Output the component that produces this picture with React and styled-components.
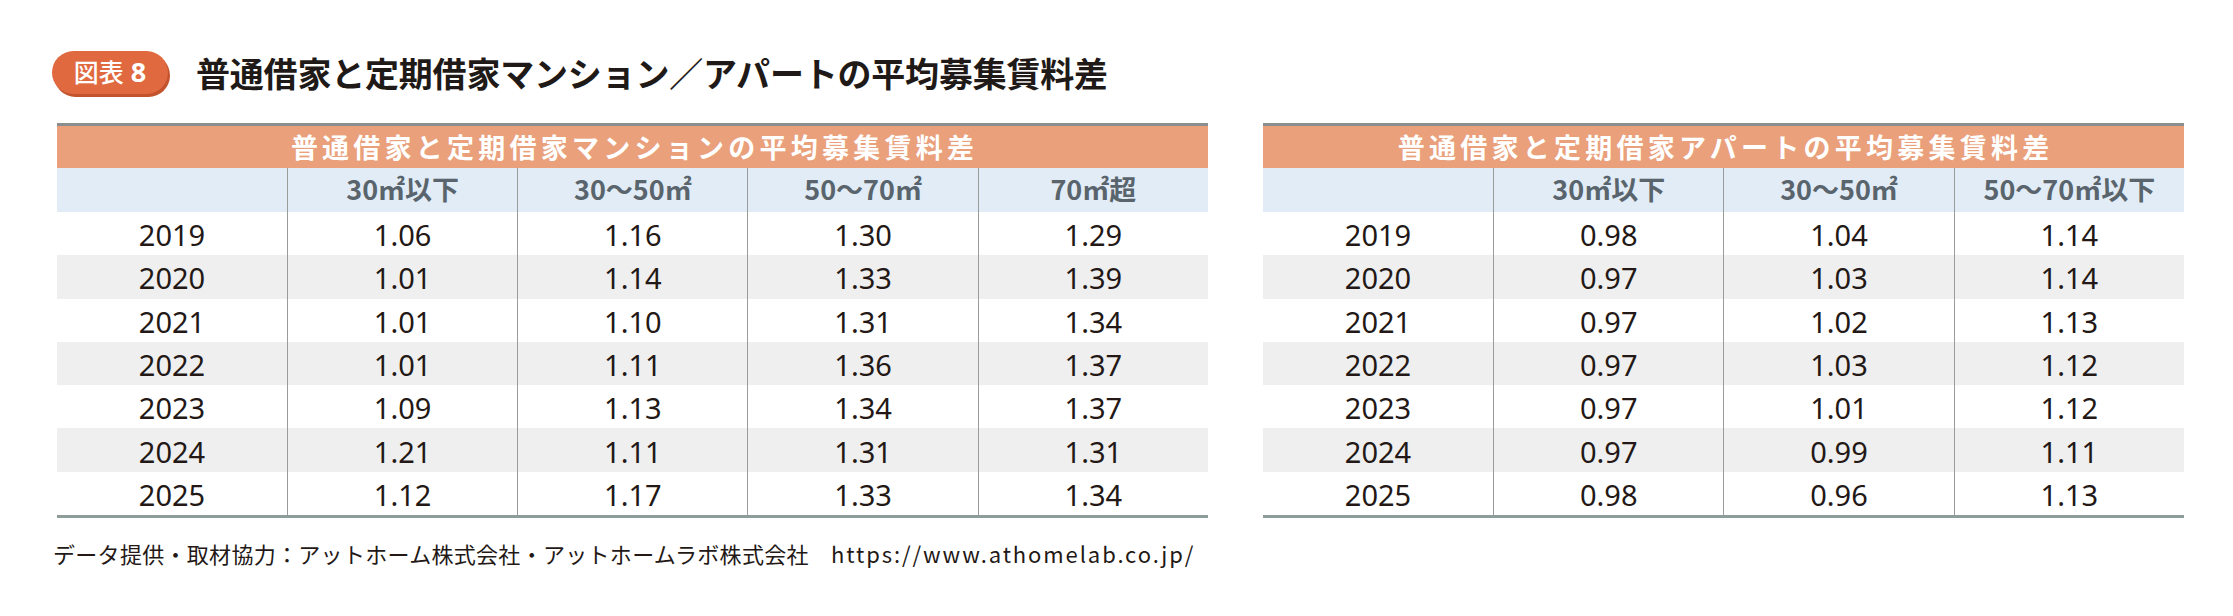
import React from "react";
import styled, { createGlobalStyle } from "styled-components";

const GlobalStyle = createGlobalStyle`
  html, body { margin: 0; padding: 0; background: #ffffff; }
  body { font-family: "Noto Sans CJK JP", "Noto Sans", sans-serif; color: #231815; }
`;

const Page = styled.div`
  width: 2233px;
  height: 616px;
  box-sizing: border-box;
  padding: 51px 0 0 52px;
  background: #ffffff;
`;

const TitleRow = styled.div`
  display: flex;
  align-items: center;
  gap: 28px;
  height: 43px;
`;

const Badge = styled.div`
  display: flex;
  align-items: center;
  justify-content: center;
  gap: 7px;
  width: 116px;
  height: 43px;
  border-radius: 22px;
  background: #e0693f;
  box-shadow: 2px 3px 0 #c2532d;
  color: #ffffff;
  font-family: "Noto Sans CJK JP", sans-serif;
  font-size: 25px;
  font-weight: 500;
  line-height: 1;
  padding-bottom: 2px;
  box-sizing: border-box;
`;

const BadgeNum = styled.span`
  font-family: "Noto Sans", "Noto Sans CJK JP", sans-serif;
  font-weight: 700;
  font-size: 27px;
`;

const Title = styled.h1`
  margin: 0;
  font-family: "Noto Sans CJK JP", sans-serif;
  font-size: 34px;
  font-weight: 700;
  letter-spacing: -0.2px;
  color: #1f1a17;
  line-height: 43px;
`;

const Tables = styled.div`
  display: flex;
  gap: 55px;
  margin: 29px 0 0 5px;
  align-items: flex-start;
`;

const Table = styled.table`
  border-collapse: separate;
  border-spacing: 0;
  table-layout: fixed;
  border-top: 3px solid #8b8e8e;
  border-bottom: 3px solid #8e9c9a;
  width: ${(p) => p.$cols * 230 + 1}px;

  th, td {
    box-sizing: border-box;
  }
`;

const Caption = styled.th`
  height: 42px;
  padding: 0 0 2px;
  background: #e9a07b;
  color: #ffffff;
  font-family: "Noto Sans CJK JP", sans-serif;
  font-size: 27px;
  font-weight: 700;
  letter-spacing: 4.25px;
  text-indent: 4.25px;
  text-align: center;
  line-height: 1;
`;

const HeadCell = styled.th`
  height: 44px;
  padding: 0 0 4px;
  background: #e1ecf6;
  color: #59646c;
  font-family: "Noto Sans CJK JP", sans-serif;
  font-size: 27px;
  font-weight: 700;
  text-align: center;
  line-height: 1;
  border-left: ${(p) => (p.$first ? "none" : "1px solid #9a9c9c")};
`;

const Row = styled.tr`
  background: ${(p) => (p.$alt ? "#efefef" : "#ffffff")};
`;

const Cell = styled.td`
  height: 43.3px;
  padding: 2px 0 0;
  text-align: center;
  font-family: "Noto Sans", "Noto Sans CJK JP", sans-serif;
  font-size: 29px;
  font-weight: 400;
  color: #231815;
  line-height: 1;
  border-left: ${(p) => (p.$first ? "none" : "1px solid #9a9c9c")};
`;

const Footer = styled.div`
  margin: 20px 0 0 1px;
  font-family: "Noto Sans CJK JP", sans-serif;
  font-size: 22px;
  letter-spacing: 0.3px;
  line-height: 30px;
  color: #231815;
  white-space: pre;
`;

const Url = styled.span`
  letter-spacing: 1.9px;
`;

const years = ["2019", "2020", "2021", "2022", "2023", "2024", "2025"];

const mansion = {
  caption: "普通借家と定期借家マンションの平均募集賃料差",
  heads: ["30㎡以下", "30～50㎡", "50～70㎡", "70㎡超"],
  rows: [
    ["1.06", "1.16", "1.30", "1.29"],
    ["1.01", "1.14", "1.33", "1.39"],
    ["1.01", "1.10", "1.31", "1.34"],
    ["1.01", "1.11", "1.36", "1.37"],
    ["1.09", "1.13", "1.34", "1.37"],
    ["1.21", "1.11", "1.31", "1.31"],
    ["1.12", "1.17", "1.33", "1.34"],
  ],
};

const apart = {
  caption: "普通借家と定期借家アパートの平均募集賃料差",
  heads: ["30㎡以下", "30～50㎡", "50～70㎡以下"],
  rows: [
    ["0.98", "1.04", "1.14"],
    ["0.97", "1.03", "1.14"],
    ["0.97", "1.02", "1.13"],
    ["0.97", "1.03", "1.12"],
    ["0.97", "1.01", "1.12"],
    ["0.97", "0.99", "1.11"],
    ["0.98", "0.96", "1.13"],
  ],
};

function RentTable({ data }) {
  const cols = data.heads.length + 1;
  return (
    <Table $cols={cols}>
      <colgroup>
        {Array.from({ length: cols }).map((_, i) => (
          <col key={i} style={{ width: i === 0 ? 230 : 230.2 }} />
        ))}
      </colgroup>
      <thead>
        <tr>
          <Caption colSpan={cols}>{data.caption}</Caption>
        </tr>
        <tr>
          <HeadCell $first />
          {data.heads.map((h) => (
            <HeadCell key={h}>{h}</HeadCell>
          ))}
        </tr>
      </thead>
      <tbody>
        {data.rows.map((r, i) => (
          <Row key={years[i]} $alt={i % 2 === 1}>
            <Cell $first>{years[i]}</Cell>
            {r.map((v, j) => (
              <Cell key={j}>{v}</Cell>
            ))}
          </Row>
        ))}
      </tbody>
    </Table>
  );
}

export default function App() {
  return (
    <>
      <GlobalStyle />
      <Page>
        <TitleRow>
          <Badge>
            <span>図表</span>
            <BadgeNum>8</BadgeNum>
          </Badge>
          <Title>普通借家と定期借家マンション／アパートの平均募集賃料差</Title>
        </TitleRow>
        <Tables>
          <RentTable data={mansion} />
          <RentTable data={apart} />
        </Tables>
        <Footer>
          {"データ提供・取材協力：アットホーム株式会社・アットホームラボ株式会社\u3000"}
          <Url>https://www.athomelab.co.jp/</Url>
        </Footer>
      </Page>
    </>
  );
}
